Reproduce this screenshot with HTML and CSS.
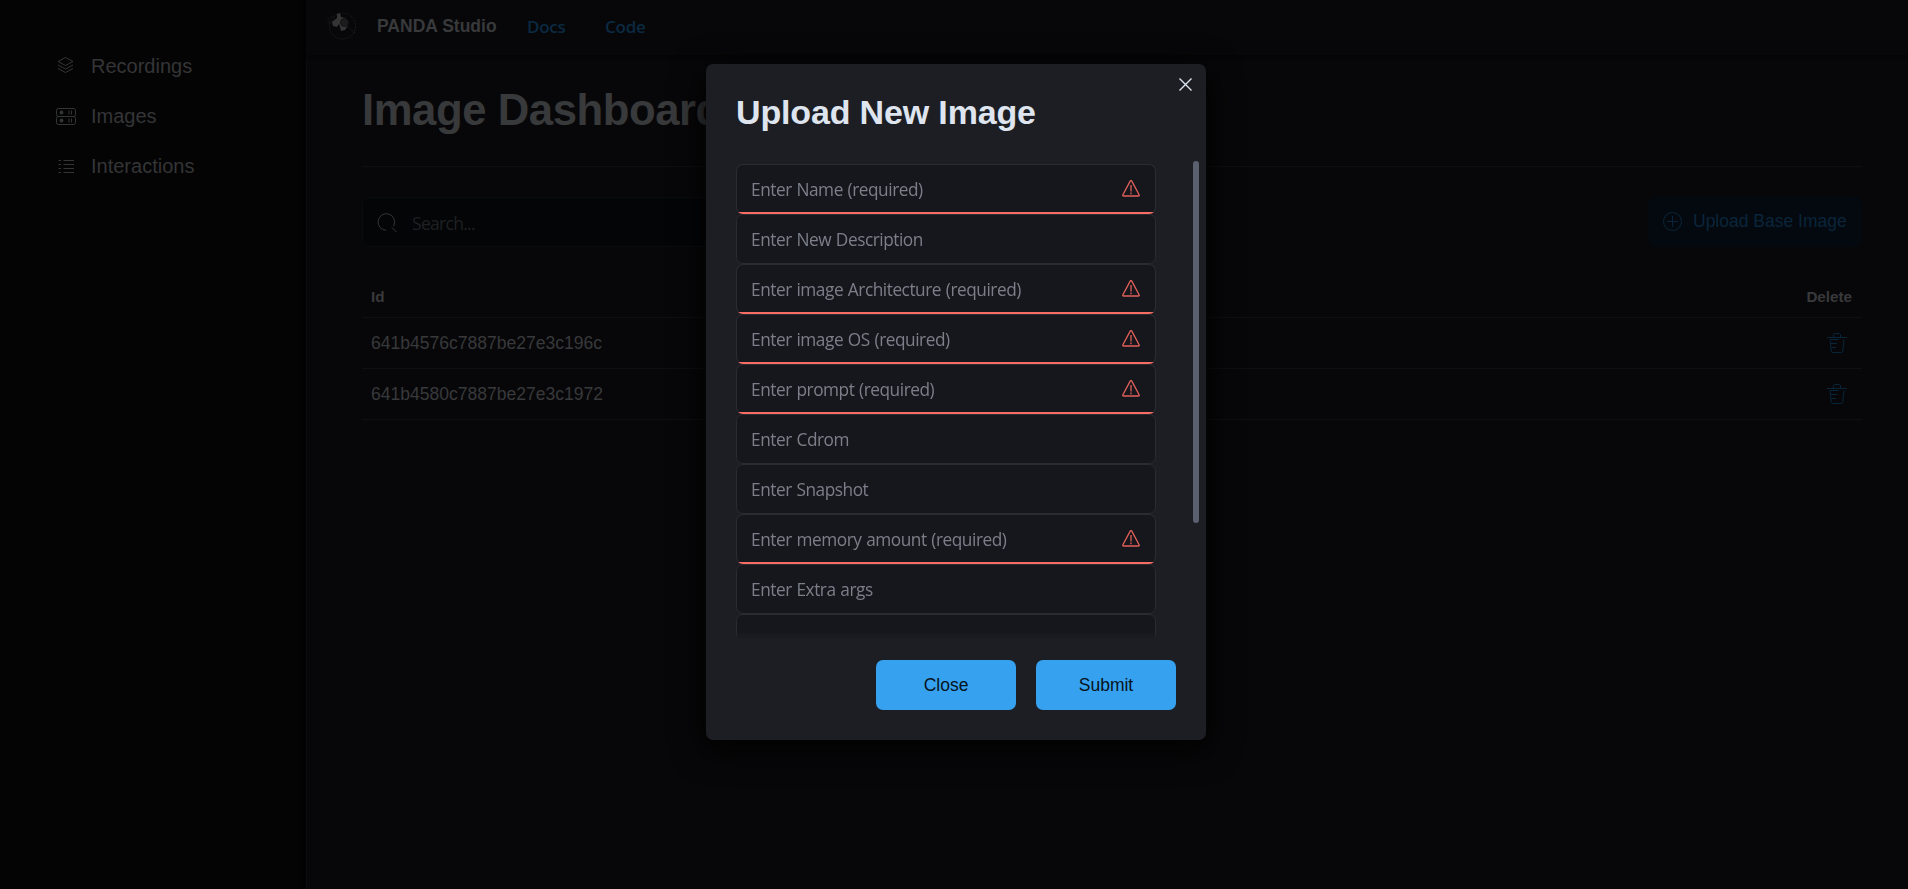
FILE: index.html
```html
<!DOCTYPE html>
<html lang="en">
<head>
<meta charset="utf-8">
<title>PANDA Studio</title>
<link rel="stylesheet" href="styles.css">
</head>
<body>
<svg class="sprite" aria-hidden="true">
  <symbol id="warn" viewBox="0 0 18 17"><path d="M8.200 1.100a.9.9 0 0 1 1.600 0l7.300 13.600c.4.8 0 1.300-.8 1.300H1.700c-.8 0-1.200-.5-.8-1.300zM9 5v6.400M9 12.600v1.600"/></symbol>
  <symbol id="trash" viewBox="0 0 20 20"><path d="M0 4.500h20M6.500 4.500V2c0-1 .5-1.500 1.500-1.500h4c1 0 1.500.5 1.500 1.500v2.500M3 6.500l1.200 11.500c.1 1 .6 1.500 1.500 1.500h8.600c.9 0 1.400-.5 1.500-1.500L17 6.500M3.500 6.500h8M4 10.500h6M4.300 14.500H9"/></symbol>
</svg>
<div class="app">
  <nav class="sidebar">
    <a class="nav-item"><svg class="nav-icon" viewBox="0 0 20 20"><path d="M9.500 1.500l7.500 4-7.500 4-7.500-4zM2 9l7.500 4L17 9M2 12.500l7.500 4 7.500-4"/></svg>Recordings</a>
    <a class="nav-item"><svg class="nav-icon" viewBox="0 0 20 20"><rect x=".5" y="2.500" width="19" height="8" rx="1.800"/><rect x=".5" y="10.500" width="19" height="8" rx="1.800"/><path d="M13 4.500v4M15.500 4.500v4M13 12.500v4M15.500 12.500v4"/><circle class="dot" cx="5.500" cy="6.500" r="1.900"/><circle class="dot" cx="5.500" cy="14.500" r="1.900"/></svg>Images</a>
    <a class="nav-item"><svg class="nav-icon" viewBox="0 0 20 20"><path d="M2.500 4.500h2.500M7.500 4.500H18M2.500 8.500h2.500M7.500 8.500H18M2.500 12.500h2.500M7.500 12.500H18M2.500 16.500h2.500M7.500 16.500H18"/></svg>Interactions</a>
  </nav>
  <div class="main">
    <header class="topbar">
      <svg class="logo" viewBox="0 0 30 30"><circle class="ring" cx="15.500" cy="15" r="13"/><path class="ear" d="M1 8l4-3 3 2-3 4-4 1z"/><path class="face" d="M10 3l3-1 1 4 5 1 1 9-2 3-4 1-1-4-1-3-2 3-4-1-1-4 5-4z"/><circle class="lens" cx="17.500" cy="11.500" r="4"/><path class="ring" d="M20 15l8 7"/></svg>
      <strong class="brand">PANDA Studio</strong>
      <a class="top-link docs">Docs</a>
      <a class="top-link">Code</a>
    </header>
    <main class="content">
      <h1 class="page-title">Image Dashboard</h1>
      <div class="toolbar">
        <div class="search"><svg class="search-icon" viewBox="0 0 20 20"><path d="M9.300 17.300A8.300 8.300 0 1 1 16.500 13.200M14.700 14.300l5 5"/></svg><span class="search-text">Search...</span></div>
        <button class="upload"><svg class="plus-icon" viewBox="0 0 19 19"><circle cx="9.500" cy="9.500" r="9"/><path d="M4 9.500h11M9.500 4v11"/></svg><span class="upload-text">Upload Base Image</span></button>
      </div>
      <div class="table">
        <div class="row head"><span>Id</span><span>Delete</span></div>
        <div class="row"><span>641b4576c7887be27e3c196c</span><svg class="trash"><use href="#trash"/></svg></div>
        <div class="row"><span>641b4580c7887be27e3c1972</span><svg class="trash"><use href="#trash"/></svg></div>
      </div>
    </main>
  </div>
</div>
<section class="modal">
  <button class="dismiss"><svg class="cross" viewBox="0 0 13 13"><path d="M.5.5l12 12M12.500.5l-12 12"/></svg></button>
  <h2 class="modal-title">Upload New Image</h2>
  <div class="modal-body">
    <div class="fields">
      <div class="field invalid"><span>Enter Name (required)</span><svg class="warn"><use href="#warn"/></svg></div>
      <div class="field"><span>Enter New Description</span></div>
      <div class="field invalid"><span>Enter image Architecture (required)</span><svg class="warn"><use href="#warn"/></svg></div>
      <div class="field invalid"><span>Enter image OS (required)</span><svg class="warn"><use href="#warn"/></svg></div>
      <div class="field invalid"><span>Enter prompt (required)</span><svg class="warn"><use href="#warn"/></svg></div>
      <div class="field"><span>Enter Cdrom</span></div>
      <div class="field"><span>Enter Snapshot</span></div>
      <div class="field invalid"><span>Enter memory amount (required)</span><svg class="warn"><use href="#warn"/></svg></div>
      <div class="field"><span>Enter Extra args</span></div>
      <div class="field"></div>
    </div>
    <div class="scroll-thumb"></div>
  </div>
  <footer class="modal-footer"><button class="action">Close</button><button class="action">Submit</button></footer>
</section>
</body>
</html>
```
FILE: styles.css
```css
* { box-sizing: border-box; }
body { margin: 0; height: 889px; overflow: hidden; background: #070709; color: #38393b; font-family: "Liberation Sans", Arial, sans-serif; }
svg { fill: none; stroke: currentColor; display: block; flex: none; }
button { border: 0; padding: 0; font: inherit; }
.sprite { position: absolute; width: 0; height: 0; }
.app { display: flex; height: 889px; }
.sidebar { width: 306px; padding: 41px 0 0 56px; background: linear-gradient(90deg, #040404 294px, #020203); flex: none; }
.nav-item { display: flex; align-items: center; gap: 15px; height: 50px; font-size: 20px; color: #343537; }
.nav-icon { width: 20px; height: 20px; }
.dot { fill: currentColor; stroke: none; }
.main { flex: 1; border-left: 1px solid #0b0b0e; }
.topbar { display: flex; align-items: center; height: 56px; padding: 0 0 3px 20px; border-bottom: 1px solid #040405; box-shadow: 0 1px 3px #040405; }
.logo { width: 30px; height: 30px; color: #1b1b1c; }
.ring { stroke-dasharray: 2 1; }
.ear { stroke-dasharray: 1 1; }
.face { fill: #343435; stroke: none; }
.lens { fill: #1c1c1d; stroke: #111; }
.brand { margin-left: 20px; width: 121px; font-size: 17.500px; white-space: nowrap; }
.top-link { margin: 0 0 0 29px; color: #0b2a42; font: 600 17px "Open Sans", "Noto Sans", sans-serif; letter-spacing: -.25px; }
.docs { width: 49px; }
.content { padding: 29px 46px 0 55px; }
.page-title { margin: 0; height: 82px; border-bottom: 1px solid #0e0f11; font-size: 43.700px; line-height: 49px; letter-spacing: -.45px; }
.toolbar { display: flex; justify-content: space-between; margin-top: 30px; }
.search { display: flex; align-items: center; gap: 15px; width: 500px; height: 50px; padding: 1px 0 0 14px; border: 1px solid #0b0c0e; border-radius: 7px; background: #040507; color: #1f2022; font: 17.500px "Open Sans", "Noto Sans", sans-serif; letter-spacing: -.7px; }
.search-icon { width: 20px; height: 20px; color: #343537; }
.upload { display: flex; align-items: center; gap: 11px; width: 214px; height: 50px; padding: 0 0 2px 15px; border-radius: 7px; background: #04090f; color: #0a253b; font-size: 17.500px; }
.plus-icon { width: 19px; height: 19px; }
.table { margin-top: 30px; }
.row { display: flex; justify-content: space-between; align-items: center; height: 51px; padding: 0 15px 0 9px; border-bottom: 1px solid #0e0f11; font-size: 17.550px; }
.row.head { height: 41px; padding: 0 10px 1px 9px; font-size: 15.200px; }
.head { font-weight: 700; }
.trash { width: 20px; height: 20px; color: #08263b; }
.modal { position: absolute; left: 706px; top: 64px; width: 500px; height: 676px; display: flex; flex-direction: column; padding: 28px 30px 0; border-radius: 7px; background: #1d1e24; box-shadow: 0 8px 32px 2px #020202; color: #dfe5ef; }
.dismiss { position: absolute; right: 14px; top: 14px; background: none; color: #dfe5ef; }
.cross { width: 13px; height: 13px; stroke-width: 1.400; }
.modal-title { margin: 0 0 29px; height: 40px; font-size: 34px; line-height: 40px; letter-spacing: -.15px; }
.modal-body { display: flex; justify-content: space-between; width: 463px; height: 479px; }
.fields { width: 420px; height: 479px; padding-top: 3px; overflow: hidden; -webkit-mask-image: linear-gradient(#000 470px, transparent 478px); mask-image: linear-gradient(#000 470px, transparent 478px); }
.field { display: flex; align-items: center; justify-content: space-between; height: 50px; padding: 1px 15px 0 14px; border: 1px solid #2b2c31; border-radius: 7px; background: #16171c; color: #7c7f89; font: 17.250px "Open Sans", "Noto Sans", sans-serif; letter-spacing: -.46px; word-spacing: .7px; }
.invalid { background: linear-gradient(#f66d64, #f66d64) 0 100% / 100% 2px no-repeat border-box, #16171c; border-bottom-color: transparent; }
.warn { width: 18px; height: 17px; color: #e1605a; stroke-width: 1.300; margin-bottom: 2px; }
.scroll-thumb { width: 6px; height: 362px; border-radius: 3px; background: #5a606e; }
.modal-footer { display: flex; justify-content: flex-end; gap: 20px; margin-top: 20px; }
.action { width: 140px; height: 50px; border-radius: 7px; background: #36a2ef; color: #07131c; font-size: 17.500px; }
```
